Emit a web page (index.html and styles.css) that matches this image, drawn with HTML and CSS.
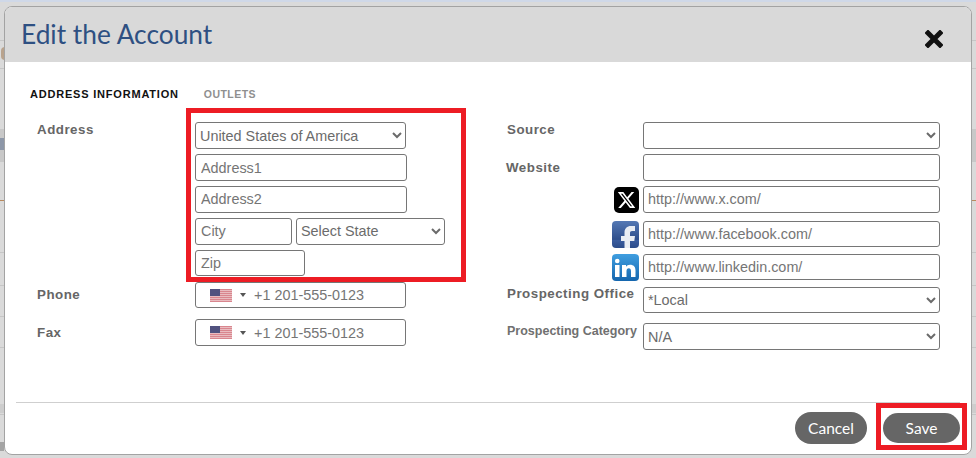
FILE: index.html
```html
<!DOCTYPE html>
<html lang="en">
<head>
<meta charset="utf-8">
<title>Edit the Account</title>
<link rel="stylesheet" href="styles.css">
</head>
<body>
<div class="backdrop">
  <i class="bg-band"></i>
  <i class="bg-band bg-band-low"></i>
  <i class="bg-line bg-line-a"></i>
  <i class="bg-line bg-line-b"></i>
  <i class="bg-line bg-line-c"></i>
  <i class="bg-line bg-line-d"></i>
  <i class="bg-line bg-line-e"></i>
  <i class="bg-line bg-line-f"></i>
  <i class="bg-line bg-line-g"></i>
  <i class="bg-line bg-line-h"></i>
  <i class="bg-glyph"></i>
  <i class="bg-tick bg-tick-s"></i>
  <i class="bg-tick bg-tick-k"></i>
</div>
<main class="modal">
  <header class="modal-head">
    <h1 class="modal-title">Edit the Account</h1>
    <button class="close" type="button" aria-label="Close">
      <svg width="18" height="18" viewBox="0 0 18 18"><path d="M3 3 15 15M15 3 3 15" stroke="#111" stroke-width="5" stroke-linecap="square" fill="none"/></svg>
    </button>
  </header>
  <nav class="tabs">
    <span class="tab tab-active">ADDRESS INFORMATION</span>
    <span class="tab">OUTLETS</span>
  </nav>
  <section class="form">
    <div class="col col-left">
      <div class="row row-address">
        <label class="label">Address</label>
        <div class="stack">
          <select class="field w-select h-27"><option>United States of America</option></select>
          <input class="field w-full h-27" placeholder="Address1">
          <input class="field field-up w-full h-27" placeholder="Address2">
          <div class="inline">
            <input class="field field-up w-city h-27" placeholder="City">
            <select class="field field-up w-state h-27"><option>Select State</option></select>
          </div>
          <input class="field w-zip h-26" placeholder="Zip">
        </div>
      </div>
      <div class="row row-phone">
        <label class="label">Phone</label>
        <div class="phone h-26">
          <svg class="flag" width="22" height="13" viewBox="0 0 22 13"><rect width="22" height="13" fill="#e9bcc0"/><path d="M0 .5h22M0 2.500h22M0 4.500h22M0 6.500h22M0 8.500h22M0 10.500h22M0 12.500h22" stroke="#d9868e" stroke-width="1"/><rect width="10" height="7" fill="#51527f"/></svg>
          <i class="caret"></i>
          <input class="phone-input" placeholder="+1 201-555-0123">
        </div>
      </div>
      <div class="row row-fax">
        <label class="label">Fax</label>
        <div class="phone h-27">
          <svg class="flag" width="22" height="13" viewBox="0 0 22 13"><rect width="22" height="13" fill="#e9bcc0"/><path d="M0 .5h22M0 2.500h22M0 4.500h22M0 6.500h22M0 8.500h22M0 10.500h22M0 12.500h22" stroke="#d9868e" stroke-width="1"/><rect width="10" height="7" fill="#51527f"/></svg>
          <i class="caret"></i>
          <input class="phone-input" placeholder="+1 201-555-0123">
        </div>
      </div>
    </div>
    <div class="col col-right">
      <div class="r-row">
        <label class="label r-label">Source</label>
        <select class="field w-wide h-27"><option></option></select>
      </div>
      <div class="r-row r-gap-5">
        <label class="label r-label r-label-web">Website</label>
        <input class="field w-wide h-27">
      </div>
      <div class="r-row r-gap-5 r-social">
        <svg class="social social-x" width="25" height="26" viewBox="0 0 25 26"><rect width="25" height="26" rx="5" fill="#000"/><path transform="translate(2.800 3.300) scale(.81)" fill="#fff" d="M18.244 2.250h3.308l-7.227 8.260 8.502 11.240H16.170l-5.214-6.817L4.990 21.750H1.680l7.730-8.835L1.254 2.250H8.080l4.713 6.231zm-1.161 17.520h1.833L7.084 4.126H5.117z"/></svg>
        <input class="field field-up w-wide h-27" placeholder="http://www.x.com/">
      </div>
      <div class="r-row r-gap-8 r-social">
        <svg class="social" width="27" height="27" viewBox="0 0 27 27"><defs><linearGradient id="fb" x1="0" y1="0" x2="0" y2="1"><stop offset="0" stop-color="#5478b4"/><stop offset=".68" stop-color="#2f4f8c"/><stop offset=".72" stop-color="#3a5c9e"/><stop offset="1" stop-color="#2c4c8a"/></linearGradient></defs><rect width="27" height="27" rx="4" fill="url(#fb)"/><path fill="#e9edf3" d="M12.500 27V20H9v-5h3.500v-3.500C12.500 7.500 15 5 19 5h4v5h-3c-1.300 0-2 .7-2 2v3h5l-.7 5H18v7z"/></svg>
        <input class="field w-wide h-26" placeholder="http://www.facebook.com/">
      </div>
      <div class="r-row r-gap-6 r-social">
        <svg class="social" width="27" height="27" viewBox="0 0 27 27"><defs><linearGradient id="li" x1="0" y1="0" x2="0" y2="1"><stop offset="0" stop-color="#3f9ee0"/><stop offset="1" stop-color="#1566ae"/></linearGradient></defs><rect width="27" height="27" rx="4" fill="url(#li)"/><path fill="#fff" d="M3 11h4.500v12H3zM5.250 4.700a2.300 2.300 0 1 1 0 4.600 2.300 2.300 0 0 1 0-4.600zM10 11h4v1.800c.8-1.300 2.200-2.100 4-2.100 3.600 0 5.500 2.100 5.500 5.800V23H19v-5.800c0-1.900-.7-3-2.200-3s-2.300 1.100-2.300 3V23H10z"/></svg>
        <input class="field w-wide h-26" placeholder="http://www.linkedin.com/">
      </div>
      <div class="r-row r-gap-6">
        <label class="label r-label r-label-office">Prospecting Office</label>
        <select class="field w-wide h-26"><option>*Local</option></select>
      </div>
      <div class="r-row r-gap-10">
        <label class="label r-label r-label-cat">Prospecting Category</label>
        <select class="field w-wide h-27"><option>N/A</option></select>
      </div>
    </div>
  </section>
  <footer class="modal-foot">
    <button class="btn btn-cancel" type="button">Cancel</button>
    <button class="btn btn-save" type="button">Save</button>
  </footer>
  <div class="mark mark-address"></div>
  <div class="mark mark-save"></div>
</main>
</body>
</html>
```
FILE: styles.css
```css
* { box-sizing: border-box; }
html, body { margin: 0; height: 458px; overflow: hidden; }
body {
  position: relative;
  background: #dadada;
  border-top: 2px solid #cfd8e8;
  padding: 4px 4px 3px 4px;
  font-family: "Liberation Sans", Arial, sans-serif;
}
.backdrop { position: absolute; inset: 0; }
.bg-band { position: absolute; left: 0; right: 0; top: 127px; height: 33px; background: #c8c8c8; }
.bg-band-low { top: 402px; height: 9px; background: #cdcdcd; }
.bg-line { position: absolute; left: 0; right: 0; height: 1px; background: #c6c6c6; }
.bg-line-a { top: 38px; }
.bg-line-b { top: 66px; }
.bg-line-c { top: 198px; background: #b98a5e; }
.bg-line-d { top: 250px; }
.bg-line-e { top: 283px; }
.bg-line-f { top: 314px; }
.bg-line-g { top: 345px; }
.bg-line-h { top: 412px; }
.bg-glyph { position: absolute; left: 1px; top: 45px; width: 4px; height: 13px; border-radius: 4px 0 0 4px; background: #b9a38d; }
.bg-tick { position: absolute; left: 0; width: 4px; background: #8d97a8; }
.bg-tick-s { top: 136px; height: 12px; }
.bg-tick-k { top: 440px; height: 9px; background: #a4a4a4; }
.modal {
  position: relative;
  height: 449px;
  background: #fff;
  border: 1px solid #a3a3a3;
  border-radius: 8px;
  overflow: hidden;
}
.modal-head {
  height: 55px;
  background: #d9d9d9;
  display: flex;
  align-items: flex-start;
  justify-content: space-between;
  padding: 0 28px 0 16px;
}
.modal-title {
  margin: 11px 0 0;
  font: 400 26.300px/32px Lato, sans-serif;
  color: #2e5082;
}
.close { margin-top: 23px; padding: 0; border: 0; background: none; width: 18px; height: 18px; display: block; }
.close svg { display: block; }
.tabs { display: flex; gap: 25px; padding: 25px 0 0 25px; height: 47px; }
.tab { font: 700 10.500px/14px "Liberation Sans", sans-serif; letter-spacing: .45px; color: #8f8f8f; }
.tab-active { color: #111; font-size: 11px; letter-spacing: .8px; }
.form { display: flex; padding: 13px 0 0 32px; height: 293px; }
.col-left { width: 470px; flex: none; }
.col-right { flex: 1; padding-right: 31px; }
.row { display: flex; }
.label { font: 700 13.330px/16px "Liberation Sans", sans-serif; color: #666; letter-spacing: .5px; }
.row .label { width: 158px; flex: none; }
.row-phone { margin-top: 6px; align-items: center; }
.row-fax { margin-top: 11px; align-items: center; }
.stack { display: flex; flex-direction: column; gap: 5px; }
.inline { display: flex; gap: 4px; }
.field {
  display: block;
  border: 1px solid #767676;
  border-radius: 3px;
  background: #fff;
  font: 400 14.400px "Liberation Sans", sans-serif;
  color: #6b6b6b;
  padding: 0 5px 0 4px;
  margin: 0;
  outline: 0;
}
.stack input.field { padding-left: 5px; }
select.field { padding: 0; }
.field.field-up { padding-bottom: 2px; }
.field::placeholder, .phone-input::placeholder { color: #757575; opacity: 1; }
.h-26 { height: 26px; }
.h-27 { height: 27px; }
.w-select { width: 211px; }
.w-full { width: 212px; }
.w-city { width: 97px; }
.w-state { width: 149px; }
.w-zip { width: 110px; }
.phone {
  width: 211px;
  border: 1px solid #767676;
  border-radius: 3px;
  display: flex;
  align-items: center;
  padding-left: 14px;
}
.flag { flex: none; }
.caret { width: 0; height: 0; border: 3px solid transparent; border-top: 4px solid #555; border-bottom: 0; margin-left: 8px; flex: none; }
.phone-input { border: 0; outline: 0; padding: 0; margin-left: 8px; width: 150px; font: 400 14.400px "Liberation Sans", sans-serif; background: transparent; }
.w-wide { width: 297px; flex: none; margin-left: auto; }
.r-row { display: flex; align-items: flex-start; }
.r-gap-5 { margin-top: 5px; }
.r-gap-6 { margin-top: 6px; }
.r-gap-8 { margin-top: 8px; }
.r-gap-10 { margin-top: 10px; }
.r-label { flex: none; }
.r-label-web { margin-left: -1px; margin-top: 6px; }
.r-label-office { margin-top: -1px; }
.r-label-cat { font-size: 12.500px; letter-spacing: 0; color: #707070; white-space: nowrap; }
.r-social { padding-left: 105px; gap: 4px; }
.social { flex: none; }
.social-x { margin: 1px 0 0 2px; }
.r-social .w-wide { margin-left: 0; }
.modal-foot {
  margin: 0 11px;
  border-top: 1px solid #cfcfcf;
  display: flex;
  justify-content: flex-end;
  align-items: center;
  gap: 16px;
  height: 50px;
}
.btn { border: 0; background: #666; color: #fff; font: 400 15.500px Lato, sans-serif; border-radius: 16px; padding: 0; }
.btn-cancel { width: 72px; height: 32px; }
.btn-save { width: 77px; height: 30px; }
.mark { position: absolute; border: 5px solid #ed1c24; }
.mark-address { left: 181px; top: 101px; width: 280px; height: 174px; }
.mark-save { left: 871px; top: 396px; width: 91px; height: 47px; }
```
